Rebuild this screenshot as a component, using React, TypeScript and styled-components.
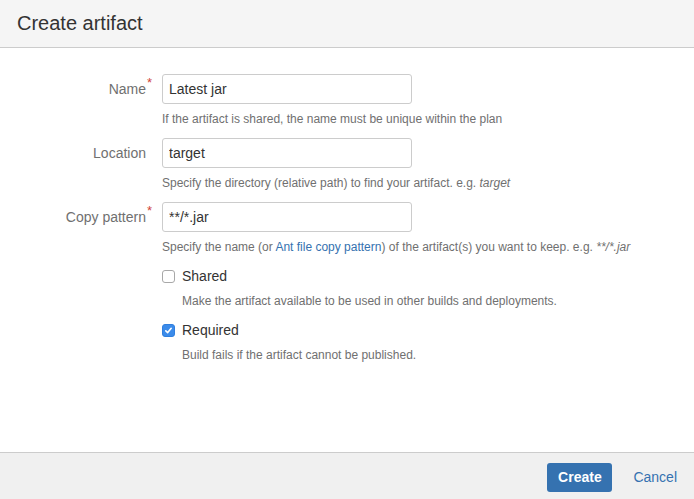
import { FC, ReactNode } from "react";
import styled, { createGlobalStyle } from "styled-components";

const GlobalStyle = createGlobalStyle`
  html, body {
    margin: 0;
    padding: 0;
    background: #fff;
  }
  body {
    font-family: "Liberation Sans", Arial, sans-serif;
    color: #333;
  }
`;

type FieldProps = {
  label: string;
  required?: boolean;
  value: string;
  help: ReactNode;
};

const Field: FC<FieldProps> = ({ label, required, value, help }) => (
  <StFieldRow>
    <StLabel>
      {label}
      {required && <StRequired>*</StRequired>}
    </StLabel>
    <StFieldBody>
      <StInput defaultValue={value} />
      <StHelp>{help}</StHelp>
    </StFieldBody>
  </StFieldRow>
);

type CheckProps = {
  label: string;
  checked?: boolean;
  help: string;
};

const CheckField: FC<CheckProps> = ({ label, checked, help }) => (
  <StCheckRow>
    <StCheckLine>
      <StBox $checked={!!checked}>
        {checked && (
          <svg width="9" height="9" viewBox="0 0 9 9">
            <path
              d="M1.8 4.8 L3.7 6.6 L7.2 2.3"
              fill="none"
              stroke="#fff"
              strokeWidth="1.6"
              strokeLinecap="round"
              strokeLinejoin="round"
            />
          </svg>
        )}
      </StBox>
      <StCheckLabel>{label}</StCheckLabel>
    </StCheckLine>
    <StCheckHelp>{help}</StCheckHelp>
  </StCheckRow>
);

export default function App() {
  return (
    <>
      <GlobalStyle />
      <StDialog>
        <StHeader>
          <StTitle>Create artifact</StTitle>
        </StHeader>
        <StContent>
          <Field
            label="Name"
            required
            value="Latest jar"
            help="If the artifact is shared, the name must be unique within the plan"
          />
          <Field
            label="Location"
            value="target"
            help={
              <>
                Specify the directory (relative path) to find your artifact. e.g. <em>target</em>
              </>
            }
          />
          <Field
            label="Copy pattern"
            required
            value="**/*.jar"
            help={
              <>
                Specify the name (or <StLink href="#">Ant file copy pattern</StLink>) of the
                artifact(s) you want to keep. e.g. <em>**/*.jar</em>
              </>
            }
          />
          <StChecks>
            <CheckField
              label="Shared"
              help="Make the artifact available to be used in other builds and deployments."
            />
            <CheckField
              label="Required"
              checked
              help="Build fails if the artifact cannot be published."
            />
          </StChecks>
        </StContent>
        <StFooter>
          <StPrimary>Create</StPrimary>
          <StCancel href="#">Cancel</StCancel>
        </StFooter>
      </StDialog>
    </>
  );
}

const StDialog = styled.div`
  display: flex;
  flex-direction: column;
  height: 100vh;
  background: #fff;
`;

const StHeader = styled.header`
  height: 47px;
  display: flex;
  align-items: center;
  padding: 0 17px;
  background: #f5f5f5;
  border-bottom: 1px solid #cccccc;
`;

const StTitle = styled.h1`
  margin: 0;
  font-size: 20px;
  font-weight: normal;
  color: #333;
  line-height: 24px;
  padding-bottom: 2px;
`;

const StContent = styled.div`
  flex: 1;
  display: flex;
  flex-direction: column;
  gap: 11px;
  padding-top: 26px;
`;

const StFieldRow = styled.div`
  display: grid;
  grid-template-columns: 146px 1fr;
  column-gap: 16px;
`;

const StLabel = styled.label`
  position: relative;
  text-align: right;
  font-size: 14px;
  line-height: 30px;
  color: #707070;
`;

const StRequired = styled.span`
  position: absolute;
  left: 100%;
  top: -6px;
  margin-left: 1px;
  color: #d04437;
  font-size: 13px;
`;

const StFieldBody = styled.div`
  display: flex;
  flex-direction: column;
`;

const StInput = styled.input`
  box-sizing: border-box;
  width: 250px;
  height: 30px;
  padding: 0 6px;
  border: 1px solid #cccccc;
  border-radius: 3px;
  font-family: "Liberation Sans", Arial, sans-serif;
  font-size: 14px;
  color: #333;
  outline: none;
`;

const StHelp = styled.div`
  margin-top: 7px;
  font-size: 12px;
  line-height: 16px;
  color: #707070;

  em {
    font-style: italic;
  }
`;

const StLink = styled.a`
  color: #3572b0;
  text-decoration: none;
`;

const StChecks = styled.div`
  display: flex;
  flex-direction: column;
  gap: 11px;
  padding-left: 162px;
`;

const StCheckRow = styled.div`
  display: flex;
  flex-direction: column;
  gap: 7px;
`;

const StCheckLine = styled.div`
  display: flex;
  align-items: center;
  gap: 7px;
  height: 20px;
`;

const StBox = styled.span<{ $checked: boolean }>`
  box-sizing: border-box;
  width: 13px;
  height: 13px;
  border-radius: 3px;
  display: inline-flex;
  align-items: center;
  justify-content: center;
  background: ${({ $checked }) => ($checked ? "#3b8bea" : "#fff")};
  border: 1px solid ${({ $checked }) => ($checked ? "#2f7fdf" : "#a8a8a8")};
`;

const StCheckLabel = styled.span`
  font-size: 14px;
  color: #333;
`;

const StCheckHelp = styled.div`
  padding-left: 20px;
  font-size: 12px;
  line-height: 16px;
  color: #707070;
`;

const StFooter = styled.footer`
  box-sizing: border-box;
  height: 47px;
  padding: 2px 17px 0 0;
  display: flex;
  align-items: center;
  justify-content: flex-end;
  gap: 21px;
  background: #f0f0f0;
  border-top: 1px solid #cccccc;
`;

const StPrimary = styled.button`
  width: 65px;
  height: 29px;
  border: none;
  border-radius: 3px;
  background: #3572b0;
  color: #fff;
  font-family: "Liberation Sans", Arial, sans-serif;
  font-size: 14px;
  font-weight: bold;
  cursor: pointer;
`;

const StCancel = styled.a`
  font-size: 14px;
  color: #3572b0;
  text-decoration: none;
`;
